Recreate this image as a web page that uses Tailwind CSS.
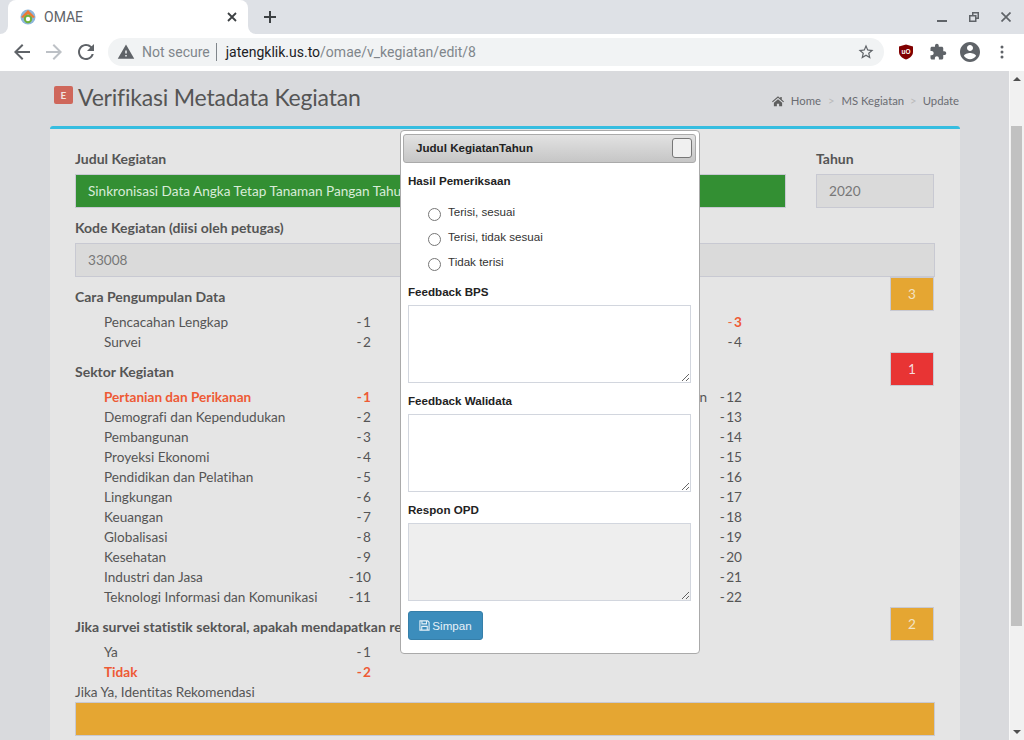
<!DOCTYPE html>
<html lang="id">
<head>
<meta charset="utf-8">
<title>OMAE</title>
<script src="https://cdn.jsdelivr.net/npm/@tailwindcss/browser@4"></script>
</head>
<body class="h-[740px] w-[1024px] overflow-hidden bg-white font-[family-name:Lato,sans-serif] [font-variant-ligatures:none]">
<div class="relative flex h-[740px] flex-col overflow-hidden">

  <!-- Tab strip -->
  <div class="flex h-[34px] shrink-0 items-end bg-[#dee1e6] pl-2 font-[family-name:Roboto,sans-serif]">
    <div class="relative flex h-[34px] w-[240px] items-center rounded-t-lg bg-white pl-3 pr-2">
      <span class="absolute -left-2 bottom-0 h-2 w-2 bg-white"><span class="block h-2 w-2 rounded-br-lg bg-[#dee1e6]"></span></span>
      <span class="absolute -right-2 bottom-0 h-2 w-2 bg-white"><span class="block h-2 w-2 rounded-bl-lg bg-[#dee1e6]"></span></span>
      <svg class="h-4 w-4 shrink-0" viewBox="0 0 16 16"><circle cx="8" cy="8" r="7.500" fill="#8db6dc"/><path d="M1 8 8 1l7 7-2 1-5-4-5 4z" fill="#ec7a35"/><circle cx="8" cy="10" r="3.200" fill="#fff" stroke="#6fb13c" stroke-width="2"/></svg>
      <span class="ml-2 flex-1 text-sm text-[#5f6368]">OMAE</span>
      <svg class="h-4 w-4 text-[#3c4043]" viewBox="0 0 16 16"><path d="M4 4l8 8M12 4l-8 8" stroke="currentColor" stroke-width="1.800" fill="none"/></svg>
    </div>
    <div class="ml-[14px] flex h-[34px] w-4 items-center justify-center">
      <svg class="h-4 w-4 text-[#3c4043]" viewBox="0 0 16 16"><path d="M8 2v12M2 8h12" stroke="currentColor" stroke-width="2" fill="none"/></svg>
    </div>
    <div class="ml-auto flex h-[34px] items-center">
      <div class="flex h-[34px] w-8 items-center justify-center"><span class="mt-2 block h-[2px] w-[10px] bg-[#5f6368]"></span></div>
      <div class="flex h-[34px] w-8 items-center justify-center"><svg class="h-[10px] w-[10px]" viewBox="0 0 10 10"><path fill-rule="evenodd" d="M3 0h7v7H7.500v3H0V3h3zM4.500 1.500V3h3v2.500H8.500v-4zM1.500 4.500v4h4.500v-4z" fill="#5f6368"/></svg></div>
      <div class="flex h-[34px] w-8 items-center justify-center"><svg class="h-[10px] w-[10px]" viewBox="0 0 10 10"><path d="M.5.500l9 9M9.500.500l-9 9" stroke="#5f6368" stroke-width="1.700" fill="none"/></svg></div>
      <div class="w-[2px]"></div>
    </div>
  </div>

  <!-- Toolbar -->
  <div class="flex h-[37px] shrink-0 items-center bg-white pb-px pl-[6px] font-[family-name:Roboto,sans-serif]">
    <div class="flex h-8 w-8 items-center justify-center"><svg class="h-6 w-6" viewBox="0 0 24 24"><path fill="#5f6368" d="M20 11H7.830l5.590-5.590L12 4l-8 8 8 8 1.410-1.410L7.830 13H20v-2z"/></svg></div>
    <div class="flex h-8 w-8 items-center justify-center"><svg class="h-6 w-6" viewBox="0 0 24 24"><path fill="#bdc1c6" d="M12 4l-1.410 1.410L16.170 11H4v2h12.170l-5.580 5.590L12 20l8-8z"/></svg></div>
    <div class="flex h-8 w-8 items-center justify-center"><svg class="h-6 w-6" viewBox="0 0 24 24"><path fill="#5f6368" d="M17.650 6.350A7.958 7.958 0 0012 4c-4.420 0-7.990 3.580-7.990 8s3.570 8 7.990 8c3.730 0 6.840-2.550 7.730-6h-2.080A5.990 5.990 0 0112 18c-3.310 0-6-2.690-6-6s2.690-6 6-6c1.660 0 3.140.690 4.220 1.780L13 11h7V4l-2.350 2.350z"/></svg></div>
    <div class="ml-[6px] flex h-7 w-[776px] items-center rounded-full bg-[#f1f3f4] pl-[9px] pr-2 text-sm">
      <svg class="h-[18px] w-[18px] shrink-0" viewBox="0 0 24 24"><path fill="#5f6368" d="M1 21h22L12 2 1 21zm12-3h-2v-2h2v2zm0-4h-2v-4h2v4z"/></svg>
      <span class="ml-[7px] text-[#80868b]">Not secure</span>
      <span class="ml-[6px] mr-[9px] h-[18px] w-px bg-[#80868b]"></span>
      <span class="text-[#202124]">jatengklik.us.to</span><span class="text-[#80868b]">/omae/v_kegiatan/edit/8</span>
      <svg class="ml-auto h-[18px] w-[18px] -translate-x-px" viewBox="0 0 24 24"><path fill="#5f6368" d="M22 9.240l-7.190-.620L12 2 9.190 8.630 2 9.240l5.460 4.730L5.820 21 12 17.270 18.180 21l-1.630-7.030L22 9.240zM12 15.400l-3.760 2.270 1-4.280-3.320-2.880 4.380-.380L12 6.100l1.710 4.040 4.380.380-3.320 2.880 1 4.280L12 15.400z"/></svg>
    </div>
    <div class="ml-[6px] flex h-8 w-8 items-center justify-center"><svg class="h-4 w-4" viewBox="0 0 16 16"><path d="M8 .500 15 2.500V8c0 3.500-3 6-7 7.500C4 14 1 11.500 1 8V2.500z" fill="#800000"/><text x="8" y="10" font-size="6.500" font-weight="700" text-anchor="middle" fill="#fff" font-family="Liberation Sans">uO</text></svg></div>
    <div class="flex h-8 w-8 items-center justify-center"><svg class="h-[18px] w-[18px]" viewBox="0 0 24 24"><path fill="#5f6368" d="M20.500 11H19V7c0-1.100-.9-2-2-2h-4V3.500C13 2.120 11.880 1 10.500 1S8 2.120 8 3.500V5H4c-1.100 0-1.990.9-1.990 2v3.800H3.500c1.490 0 2.700 1.210 2.700 2.700s-1.210 2.700-2.700 2.700H2V20c0 1.100.9 2 2 2h3.800v-1.500c0-1.490 1.210-2.700 2.700-2.700 1.490 0 2.700 1.210 2.700 2.700V22H17c1.100 0 2-.9 2-2v-4h1.500c1.380 0 2.500-1.120 2.500-2.500S21.880 11 20.500 11z"/></svg></div>
    <div class="flex h-8 w-8 items-center justify-center"><svg class="h-6 w-6" viewBox="0 0 24 24"><path fill="#5f6368" d="M12 2C6.480 2 2 6.480 2 12s4.480 10 10 10 10-4.480 10-10S17.520 2 12 2zm0 3c1.660 0 3 1.340 3 3s-1.340 3-3 3-3-1.340-3-3 1.340-3 3-3zm0 14.200c-2.500 0-4.710-1.280-6-3.220.03-1.990 4-3.080 6-3.080 1.990 0 5.970 1.090 6 3.080-1.290 1.940-3.500 3.220-6 3.220z"/></svg></div>
    <div class="flex h-8 w-8 items-center justify-center"><svg class="h-4 w-4" viewBox="0 0 16 16"><g fill="#5f6368"><circle cx="8" cy="3" r="1.500"/><circle cx="8" cy="8" r="1.500"/><circle cx="8" cy="13" r="1.500"/></g></svg></div>
  </div>

  <!-- Viewport -->
  <div class="flex min-h-0 flex-1">
    <main class="min-w-0 flex-1 overflow-hidden bg-[#d9dadd] pl-[50px] pr-[49px] text-[13.600px] leading-5 text-[#555]">
      <div class="flex h-[55px] items-start">
        <span class="ml-1 mt-[15px] flex h-[18px] w-[19px] items-center justify-center rounded-[2px] bg-[#cf675b] text-[10px] font-bold text-[#f3e3e0]">E</span>
        <h1 class="ml-[5px] mt-[11px] text-[23px] leading-[30px] tracking-[-0.2px] text-[#555]">Verifikasi Metadata Kegiatan</h1>
        <div class="ml-auto mr-px mt-5 flex items-center text-[11.300px] leading-5 text-[#6a6c72]">
          <svg class="mr-[7px] h-3 w-3" viewBox="0 0 16 16"><path fill="#5f5f5f" d="M8 1.500 0 8.500l1 1L8 3.500l7 6 1-1-3-2.600V2.500h-2v1.700zM2.500 10.200V15H6.500v-3.500h3V15h4v-4.800L8 5.500z"/></svg>
          <span>Home</span><span class="mx-[7px] text-[#bbb]">&gt;</span><span>MS Kegiatan</span><span class="mx-[6px] text-[#bbb]">&gt;</span><span>Update</span>
        </div>
      </div>

      <section class="h-[620px] rounded-t-[3px] border-t-[3px] border-[#36bde0] bg-[#e5e5e5] px-[25px] pt-5">
        <div class="grid grid-cols-[711px_119px] gap-x-[30px]">
          <div>
            <div class="h-5 text-sm font-bold">Judul Kegiatan</div>
            <div class="mt-[5px] flex h-[34px] items-center overflow-hidden whitespace-nowrap border border-[#c8c9d2] bg-[#338f33] px-3 text-[#d8ecd8]">Sinkronisasi Data Angka Tetap Tanaman Pangan Tahun 2020</div>
          </div>
          <div>
            <div class="h-5 text-sm font-bold">Tahun</div>
            <div class="mt-[5px] flex h-[34px] w-[118px] items-center border border-[#c8c9d2] bg-[#dadada] px-3 text-[#777]">2020</div>
          </div>
        </div>

        <div class="mt-[10px] h-5 text-sm leading-5 font-bold">Kode Kegiatan (diisi oleh petugas)</div>
        <div class="mt-[5px] flex h-[34px] items-center border border-[#c8c9d2] bg-[#dadada] px-3 text-[#777]">33008</div>

        <div class="mt-[10px] flex h-5 justify-between font-bold">
          <span class="text-sm leading-5">Cara Pengumpulan Data</span>
          <span class="mr-px -mt-[10px] flex h-[34px] w-[44px] items-center justify-center border border-[#c8c9d2] bg-[#e5a632] font-normal text-[#f2e3c4]">3</span>
        </div>
        <div class="mt-[5px] grid grid-cols-[241px_26px_336px_35px] pl-[29px] whitespace-nowrap [&>*:nth-child(even)]:[word-spacing:-2px]">
          <span>Pencacahan Lengkap</span><span class="text-right">- 1</span><span class="pl-9">Kompilasi Produk Administrasi</span><span class="text-right"><span class="text-[#ee6a45]">- </span><b class="font-bold text-[#ee5a35]">3</b></span>
          <span>Survei</span><span class="text-right">- 2</span><span class="pl-9">Cara Lain</span><span class="text-right">- 4</span>
        </div>

        <div class="mt-[10px] flex h-5 justify-between font-bold">
          <span class="text-sm leading-5">Sektor Kegiatan</span>
          <span class="mr-px -mt-[10px] flex h-[34px] w-[44px] items-center justify-center border border-[#c8c9d2] bg-[#e83434] font-normal text-[#f7dcdc]">1</span>
        </div>
        <div class="mt-[5px] grid grid-cols-[241px_26px_336px_35px] pl-[29px] whitespace-nowrap [&>*:nth-child(even)]:[word-spacing:-2px]">
          <b class="font-bold text-[#ee5a35]">Pertanian dan Perikanan</b><b class="text-right font-bold text-[#ee5a35]">- 1</b><span class="text-right">Perdagangan dan Neraca Pembayaran</span><span class="text-right">- 12</span>
          <span>Demografi dan Kependudukan</span><span class="text-right">- 2</span><span class="pl-9">Harga-harga</span><span class="text-right">- 13</span>
          <span>Pembangunan</span><span class="text-right">- 3</span><span class="pl-9">Tenaga Kerja dan Pekerja</span><span class="text-right">- 14</span>
          <span>Proyeksi Ekonomi</span><span class="text-right">- 4</span><span class="pl-9">Neraca Nasional</span><span class="text-right">- 15</span>
          <span>Pendidikan dan Pelatihan</span><span class="text-right">- 5</span><span class="pl-9">Indikator Ekonomi Jangka Pendek</span><span class="text-right">- 16</span>
          <span>Lingkungan</span><span class="text-right">- 6</span><span class="pl-9">Penggunaan Waktu dan Aktivitas</span><span class="text-right">- 17</span>
          <span>Keuangan</span><span class="text-right">- 7</span><span class="pl-9">Perbankan, Asuransi dan Finansial</span><span class="text-right">- 18</span>
          <span>Globalisasi</span><span class="text-right">- 8</span><span class="pl-9">Kemiskinan</span><span class="text-right">- 19</span>
          <span>Kesehatan</span><span class="text-right">- 9</span><span class="pl-9">Gender dan Kelompok Khusus</span><span class="text-right">- 20</span>
          <span>Industri dan Jasa</span><span class="text-right">- 10</span><span class="pl-9">Multi-domain</span><span class="text-right">- 21</span>
          <span>Teknologi Informasi dan Komunikasi</span><span class="text-right">- 11</span><span class="pl-9">Lainnya</span><span class="text-right">- 22</span>
        </div>

        <div class="mt-[10px] flex h-5 justify-between whitespace-nowrap font-bold">
          <span class="text-sm leading-5">Jika survei statistik sektoral, apakah mendapatkan rekomendasi</span>
          <span class="mr-px -mt-[10px] flex h-[34px] w-[44px] items-center justify-center border border-[#c8c9d2] bg-[#e5a632] font-normal text-[#f2e3c4]">2</span>
        </div>
        <div class="mt-[5px] grid grid-cols-[241px_26px] pl-[29px] [&>*:nth-child(even)]:[word-spacing:-2px]">
          <span>Ya</span><span class="text-right">- 1</span>
          <b class="font-bold text-[#ee5a35]">Tidak</b><b class="text-right font-bold text-[#ee5a35]">- 2</b>
        </div>
        <div class="h-5">Jika Ya, Identitas Rekomendasi</div>
        <div class="h-[34px] border border-[#c8c9d2] bg-[#e5a632]"></div>
      </section>
    </main>

    <!-- Scrollbar -->
    <div class="flex w-[15px] shrink-0 flex-col items-start border-l border-[#f8f8f8] bg-[#f1f1f1]">
      <div class="flex h-[16px] w-[13px] shrink-0 items-center justify-center"><span class="h-0 w-0 border-x-[4px] border-b-[4px] border-x-transparent border-b-[#505050]"></span></div>
      <div class="ml-px mt-[39px] h-[500px] w-[11px] bg-[#c1c1c1]"></div>
      <div class="mt-auto flex h-[16px] w-[13px] shrink-0 items-center justify-center"><span class="h-0 w-0 border-x-[4px] border-t-[4px] border-x-transparent border-t-[#505050]"></span></div>
    </div>
  </div>

  <!-- Dialog -->
  <div class="absolute left-[400px] top-[130px] flex h-[524px] w-[300px] flex-col rounded-[4px] border border-[#aaa] bg-white px-[2px] pb-[2px] pt-[3px] font-[family-name:'Liberation_Sans',sans-serif] text-[11.600px] text-[#333]">
    <div class="flex h-[29px] w-[293px] shrink-0 items-center rounded-[3px] border border-[#aaa] bg-gradient-to-b from-[#e2e2e2] to-[#c6c6c6] pb-px pl-3 pr-[3px] font-bold">
      <span class="flex-1 text-[#222]">Judul KegiatanTahun</span>
      <button class="h-5 w-5 rounded-[3px] border border-[#777] bg-[#f0f0f0]" aria-label="Tutup"></button>
    </div>
    <div class="flex flex-1 flex-col px-[5px]">
      <div class="mt-[11px] font-bold leading-[14px] text-[#222]">Hasil Pemeriksaan</div>
      <div class="mt-[15px] flex flex-col pl-5">
        <label class="flex h-[25px] items-start"><input type="radio" name="hasil" class="mt-[5px] h-[13px] w-[13px]"><span class="ml-[7px] mt-[2px] leading-[14px]">Terisi, sesuai</span></label>
        <label class="flex h-[25px] items-start"><input type="radio" name="hasil" class="mt-[5px] h-[13px] w-[13px]"><span class="ml-[7px] mt-[2px] leading-[14px]">Terisi, tidak sesuai</span></label>
        <label class="flex h-[25px] items-start"><input type="radio" name="hasil" class="mt-[5px] h-[13px] w-[13px]"><span class="ml-[7px] mt-[2px] leading-[14px]">Tidak terisi</span></label>
      </div>
      <div class="mt-[7px] font-bold leading-[14px] text-[#222]">Feedback BPS</div>
      <textarea class="mt-[6px] block h-[78px] w-[283px] border border-[#d2d6de] bg-white"></textarea>
      <div class="mt-[11px] font-bold leading-[14px] text-[#222]">Feedback Walidata</div>
      <textarea class="mt-[6px] block h-[78px] w-[283px] border border-[#d2d6de] bg-white"></textarea>
      <div class="mt-[11px] font-bold leading-[14px] text-[#222]">Respon OPD</div>
      <textarea disabled class="mt-[6px] block h-[78px] w-[283px] border border-[#d2d6de] bg-[#eee]"></textarea>
      <button class="mt-[10px] flex h-[29px] w-[75px] items-center justify-center rounded-[3px] border border-[#367fa9] bg-[#3c8dbc] text-[#e6f1f8]">
        <svg class="mr-[2px] h-[11px] w-[11px]" viewBox="0 0 12 12"><path fill="none" stroke="currentColor" stroke-width="1.200" d="M1 1h8.500L11 2.500V11H1zM3.200 1v3.200h5V1M3 11V7h6v4"/></svg>Simpan
      </button>
    </div>
  </div>
</div>
</body>
</html>
